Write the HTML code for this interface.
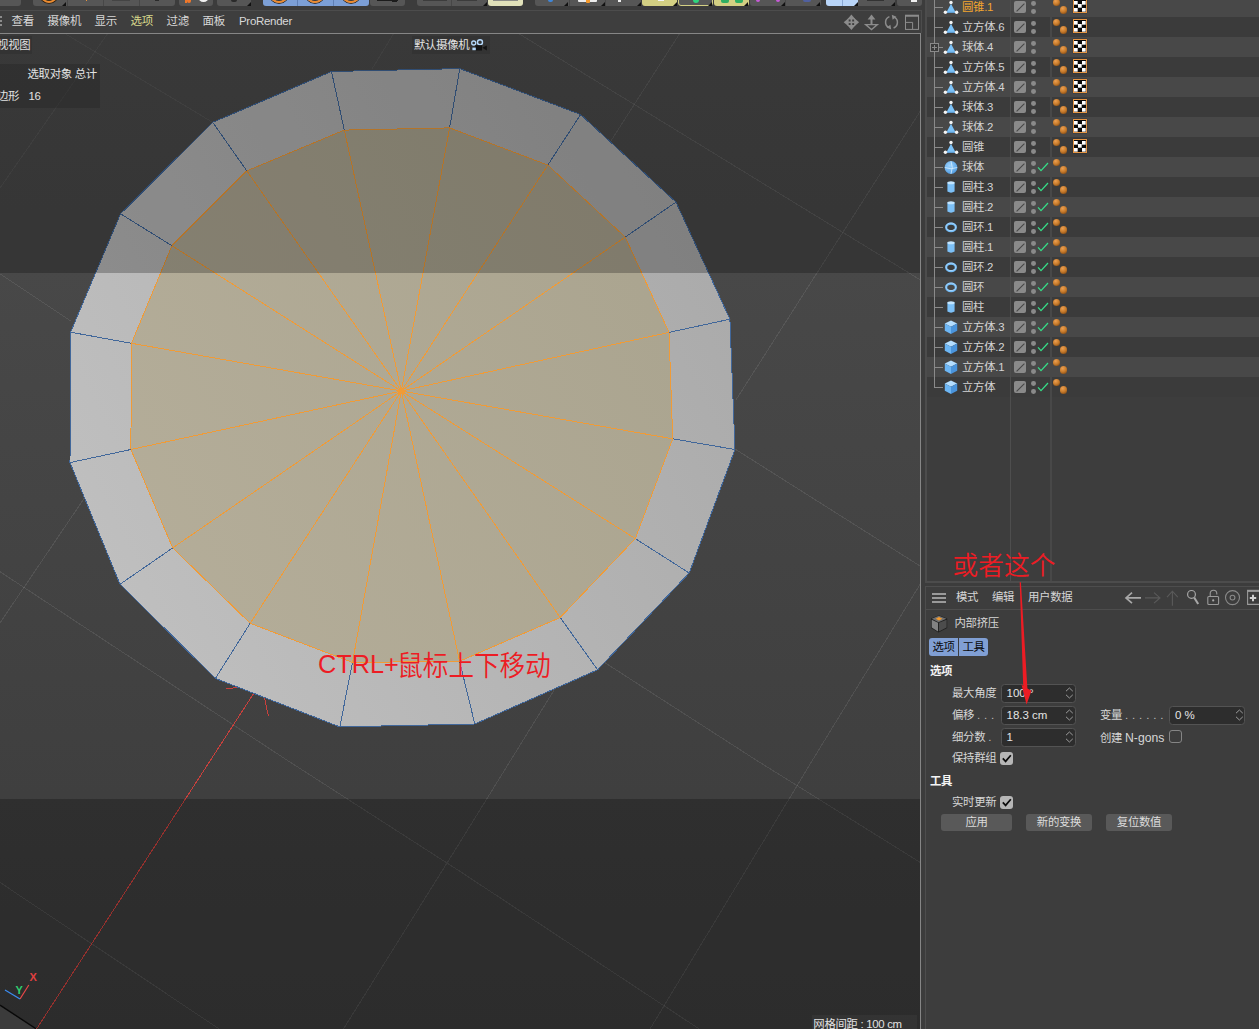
<!DOCTYPE html>
<html lang="zh-CN">
<head>
<meta charset="utf-8">
<title>Cinema 4D</title>
<style>
html,body{margin:0;padding:0}
body{width:1259px;height:1029px;overflow:hidden;position:relative;background:#3c3c3c;
 font-family:"Liberation Sans","Noto Sans CJK SC",sans-serif;font-size:11.4px;letter-spacing:-0.3px;color:#d6d6d6;line-height:1}
i{display:block;font-style:normal}
.abs{position:absolute}
/* top toolbar */
#tb{position:absolute;left:0;top:0;width:1259px;height:10px;background:#3c3c3c}
#tb .b{position:absolute;top:-4px;height:10px;background:#565656;border-radius:3px}
#tb .tri{position:absolute;top:2px;width:0;height:0;border-left:4px solid transparent;border-bottom:4px solid #111}
#tb .dv{position:absolute;top:0;width:1px;height:6px}
#tb .bl{position:absolute;border-top-left-radius:0 !important;border-top-right-radius:0 !important}
#tb .arc{position:absolute;border:2.2px solid #ee8b2e;border-radius:50%;box-shadow:0 0 0 0.8px #2a1a08, inset 0 0 0 0.8px #2a1a08}
#tb .ring{position:absolute;border:2.4px solid #f2f2f2;border-radius:50%}
#tbline{position:absolute;left:0;top:10px;width:922px;height:1px;background:#4c4c4c}
/* viewport menubar */
#mb{position:absolute;left:0;top:11px;width:922px;height:22px;background:#3e3e3e;box-sizing:border-box;border-right:1px solid #4c4c4c}
#mb .hd{position:absolute;left:0;width:2px;height:2px;background:#8c8c8c}
#mb span{position:absolute;font-size:11.5px;top:5px;white-space:nowrap;color:#d8d8d8}
#vpwrap{position:absolute;left:0;top:33px;width:921px;height:996px;background:#868686;overflow:hidden}
svg.vp{position:absolute;left:0;top:1px;width:921px;height:995px}
#vpr{position:absolute;left:920px;top:0;width:1px;height:996px;background:#868686}
svg.vp .g{stroke:#fff;stroke-opacity:0.085;stroke-width:1;shape-rendering:crispEdges}
svg.vp .gf{stroke:#fff;stroke-opacity:0.05;stroke-width:1;shape-rendering:crispEdges}
svg.vp .rx{stroke:#c8403c;stroke-width:1;shape-rendering:crispEdges}
svg.vp .b{stroke:#41679a;stroke-width:1;shape-rendering:crispEdges}
svg.vp .o{stroke:#f09b37;stroke-width:1;shape-rendering:crispEdges}
svg.vp .ax{stroke:#e84848;stroke-width:1.2}
svg.vp .az{stroke:#3c8cf0;stroke-width:1.2}
svg.vp .gz{font-family:"Liberation Sans",sans-serif;font-size:11px;font-weight:bold}
.vlabel{position:absolute;background:rgba(48,48,48,.55);color:#e2e2e2;white-space:nowrap}
.red{letter-spacing:0;color:#ed1c24;position:absolute;white-space:nowrap;transform-origin:0 0;transform:scaleY(1.13)}
/* right side */
#om{position:absolute;left:925px;top:-6px;width:340px;height:589px;border-left:2px solid #4c4c4c;border-bottom:2px solid #4c4c4c;background:#3d3d3d;overflow:hidden;box-sizing:border-box}
#omin{position:absolute;left:0;top:6px;width:340px;height:580px}
.row{position:absolute;left:0;width:340px;height:20px}
.row.l{background:#484848}.row.d{background:#3b3b3b}
.colline{position:absolute;top:0;width:1px;height:583px;background:#4e4e4e}
.tree{position:absolute;left:7px;top:0;width:1px;height:388px;background:#8a8a8a}
.br{position:absolute;left:7px;top:10px;width:9px;height:1px;background:#8a8a8a}
.plus{position:absolute;z-index:3;left:3px;top:6px;width:7px;height:7px;border:1px solid #8a8a8a;background:#3b3b3b}
.plus:before{content:"";position:absolute;left:1px;top:3px;width:5px;height:1px;background:#8a8a8a}
.plus:after{content:"";position:absolute;left:3px;top:1px;width:1px;height:5px;background:#8a8a8a}
.ic{position:absolute;left:15.6px;top:2.2px}
.nm{position:absolute;left:35px;top:4.5px;white-space:nowrap;color:#d4d4d4}
.nm.sel{color:#f3a52f}
.sq{position:absolute;left:87px;top:4px;width:12px;height:12px;border-radius:2px;background:#8a8a8a;overflow:hidden}
.sq:after{content:"";position:absolute;left:0.5px;top:5.5px;width:11px;height:1px;background:#454545;transform:rotate(-45deg)}
.dt{position:absolute;left:103.9px;width:4.8px;height:4.8px;border-radius:50%;background:#8a8a8a}
.dt.a{top:4.2px}.dt.b{top:11.8px}
.ck{position:absolute;left:110.4px;top:5px}
.ball{position:absolute;border-radius:50%;background:radial-gradient(circle at 38% 30%,#eda052 0%,#c67a2a 50%,#6e3c10 100%)}
.ball.s{left:125.9px;top:2px;width:7px;height:7px}
.ball.g{left:132.5px;top:9px;width:7.6px;height:7.6px}
.chk{position:absolute;left:146px;top:2.3px;width:12px;height:12px;border:1.2px solid #e59442;background:#0b0b0b;box-shadow:0 0 1px #222}
.chk b{position:absolute;left:0.4px;top:0.4px;width:11.2px;height:11.2px;
 background:
 linear-gradient(#fff,#fff) 0 0/3.7px 3.7px no-repeat,
 linear-gradient(#fff,#fff) 7.5px 0/3.7px 3.7px no-repeat,
 linear-gradient(#fff,#fff) 3.75px 3.75px/3.7px 3.7px no-repeat,
 linear-gradient(#fff,#fff) 0 7.5px/3.7px 3.7px no-repeat,
 linear-gradient(#fff,#fff) 7.5px 7.5px/3.7px 3.7px no-repeat}
/* attribute manager */
#am{position:absolute;left:925px;top:586px;width:340px;height:450px;border-left:1px solid #4d4d4d;border-top:1px solid #4d4d4d;background:#3d3d3d;box-sizing:border-box}
#am .t{position:absolute;white-space:nowrap;color:#d6d6d6}
#am .h{position:absolute;white-space:nowrap;color:#f4f4f4;font-weight:bold}
#amline{position:absolute;left:0;top:22px;width:340px;height:1px;background:#4d4d4d}
.ham{position:absolute;left:6px;width:14px;height:2px;background:#9a9a9a}
.tab{position:absolute;top:51px;height:18px;width:29px;background:#809fd4;color:#0a0a0a;text-align:center;line-height:18px}
.inp{position:absolute;letter-spacing:0;font-size:11.5px;margin-top:-0.7px;height:18.7px;width:75px;box-sizing:border-box;border:1px solid #535353;border-radius:3.5px;background:#2d2d2d;color:#e4e4e4}
.inp span{position:absolute;left:5px;top:3px;white-space:nowrap}
.inp svg{position:absolute;right:0.2px;top:1px}
.cb{position:absolute;width:13px;height:13px;border-radius:3px;background:#b6b6b6}
.cb.e{background:transparent;border:1px solid #858585;box-sizing:border-box}
.btn{position:absolute;top:227px;height:17px;border-radius:3px;background:#595959;color:#dcdcdc;text-align:center;line-height:17px}
.ds{font-weight:normal;letter-spacing:0.35px;color:#bdbdbd}
</style>
</head>
<body>
<!-- top toolbar (cropped) -->
<div id="tb">
 <i class="b" style="left:-4px;width:25px"></i>
 <i class="b" style="left:33px;width:142px"></i>
 <i class="dv" style="left:66.5px;background:#474747"></i>
 <i class="dv" style="left:103px;background:#474747"></i>
 <i class="dv" style="left:139px;background:#474747"></i>
 <i class="arc" style="left:40.3px;width:13.999999999999998px;height:13.999999999999998px;top:-14.799999999999999px"></i>
 <i class="tri" style="left:62px"></i>
 <i class="bl" style="left:85.5px;top:0px;width:1.6px;height:1.2px;background:#e8923a;border-radius:0px"></i>
 <i class="bl" style="left:155px;top:0px;width:4px;height:1px;background:#2a2a2a;border-radius:0px"></i>
 <i class="bl" style="left:112px;top:0px;width:18px;height:0.6px;background:#444;border-radius:0px"></i>
 <i class="b" style="left:179px;width:34px"></i>
 <i class="bl" style="left:184.5px;top:0px;width:2px;height:3.4px;background:#f0782a;border-radius:0px"></i>
 <i class="bl" style="left:186.5px;top:0px;width:4px;height:2.6px;background:#f0782a;border-radius:2px"></i>
 <i class="ring" style="left:197.6px;top:-8.6px;width:7px;height:7px"></i>
 <i class="b" style="left:217px;width:33.5px"></i>
 <i class="bl" style="left:231px;top:0px;width:5.5px;height:1.6px;background:#2a2a2a;border-radius:2px"></i>
 <i class="tri" style="left:246.5px"></i>
 <i class="b" style="left:263px;width:106px;background:#7c9fd6"></i>
 <i class="dv" style="left:297px;background:#5f7fb4"></i>
 <i class="dv" style="left:333px;background:#5f7fb4"></i>
 <i class="arc" style="left:270.4px;width:13.200000000000001px;height:13.200000000000001px;top:-14.000000000000002px"></i>
 <i class="arc" style="left:306.4px;width:13.200000000000001px;height:13.200000000000001px;top:-14.000000000000002px"></i>
 <i class="arc" style="left:342.4px;width:13.200000000000001px;height:13.200000000000001px;top:-14.000000000000002px"></i>
 <i class="b" style="left:370px;width:35px"></i>
 <i class="bl" style="left:377px;top:0px;width:21px;height:1.4px;background:#1c1c1c;border-radius:0px"></i>
 <i class="bl" style="left:392px;top:0px;width:5px;height:2.4px;background:#1c1c1c;border-radius:0px"></i>
 <i class="b" style="left:417px;width:70px"></i>
 <i class="dv" style="left:451px;background:#474747"></i>
 <i class="bl" style="left:422.5px;top:0px;width:24px;height:0.8px;background:#3c3c3c;border-radius:0px"></i>
 <i class="bl" style="left:457px;top:0px;width:20px;height:0.8px;background:#3c3c3c;border-radius:0px"></i>
 <i class="tri" style="left:483px"></i>
 <i class="b" style="left:487.5px;width:35.5px;background:#e1e1ba"></i>
 <i class="bl" style="left:493px;top:0px;width:24.5px;height:1px;background:#8c8c86;border-radius:0px"></i>
 <i class="b" style="left:534.5px;width:106.5px"></i>
 <i class="dv" style="left:568.5px;background:#474747"></i>
 <i class="dv" style="left:605px;background:#474747"></i>
 <i class="bl" style="left:547.5px;top:0px;width:5.5px;height:1.8px;background:#3f86d8;border-radius:3px"></i>
 <i class="tri" style="left:564px"></i>
 <i class="tri" style="left:600.5px"></i>
 <i class="tri" style="left:636.5px"></i>
 <i class="bl" style="left:578px;top:0px;width:19px;height:2.2px;background:#ececec;border-radius:1px"></i>
 <i class="bl" style="left:585.5px;top:0px;width:4px;height:3.4px;background:#f59a2c;border-radius:1px"></i>
 <i class="bl" style="left:617.5px;top:0px;width:3.5px;height:2px;background:#eee;border-radius:0px"></i>
 <i class="b" style="left:641.5px;width:35.5px;background:#d3cf83"></i>
 <i class="bl" style="left:657.5px;top:0px;width:6px;height:1.4px;background:#f4f4f4;border-radius:0px"></i>
 <i class="tri" style="left:672.5px"></i>
 <i class="b" style="left:678px;width:34.5px;box-sizing:border-box;border:1px solid #d3cf83"></i>
 <i class="bl" style="left:692.5px;top:0px;width:6px;height:2.6px;background:#2fd47e;border-radius:3px"></i>
 <i class="tri" style="left:707.5px"></i>
 <i class="b" style="left:714px;width:34.5px;background:#d3cf83"></i>
 <i class="bl" style="left:721px;top:0px;width:8px;height:2.8px;background:#2fae62;border-radius:2px"></i>
 <i class="bl" style="left:735px;top:0px;width:8px;height:2.8px;background:#2fae62;border-radius:2px"></i>
 <i class="tri" style="left:744px"></i>
 <i class="b" style="left:749.5px;width:71px"></i>
 <i class="dv" style="left:785px;background:#474747"></i>
 <i class="bl" style="left:755.8px;top:0px;width:4.4px;height:2px;background:#c85ad8;border-radius:2px"></i>
 <i class="bl" style="left:775.8px;top:0px;width:4.4px;height:2px;background:#c85ad8;border-radius:2px"></i>
 <i class="tri" style="left:780.5px"></i>
 <i class="bl" style="left:803px;top:0px;width:8px;height:1.6px;background:#5060a0;border-radius:2px"></i>
 <i class="tri" style="left:816px"></i>
 <i class="b" style="left:826px;width:69px"></i>
 <i class="b" style="left:826px;width:32px;background:#b9d5f8;border-radius:3px 0 0 3px"></i>
 <i class="dv" style="left:841.5px;background:#8aa8d4"></i>
 <i class="tri" style="left:854px"></i>
 <i class="bl" style="left:867px;top:0px;width:17px;height:0.8px;background:#333;border-radius:0px"></i>
 <i class="tri" style="left:890.5px"></i>
 <i class="b" style="left:896.5px;width:25.5px"></i>
 <i class="bl" style="left:911px;top:0px;width:5.6px;height:1.6px;background:#f0f0f0;border-radius:0px"></i>
</div>
<div id="tbline"></div>
<!-- viewport menu bar -->
<div id="mb">
 <i class="hd" style="top:5px"></i><i class="hd" style="top:9px"></i><i class="hd" style="top:13px"></i>
 <svg class="abs" style="left:840px;top:2px" width="82" height="20" viewBox="840 13 82 20">
  <g fill="#8c8c8c"><polygon points="851.4,14.6 847.2,19.6 855.6,19.6"/><polygon points="851.4,30 847.2,25 855.6,25"/><polygon points="843.7,22.3 848.7,18.1 848.7,26.5"/><polygon points="859.1,22.3 854.1,18.1 854.1,26.5"/><rect x="850.6" y="19" width="1.6" height="6.6"/><rect x="848.1" y="21.5" width="6.6" height="1.6"/></g>
  <g fill="#8c8c8c"><polygon points="871.5,14.6 867.6,19.4 875.4,19.4"/><rect x="870.5" y="19" width="2" height="5.6"/></g>
  <polygon points="865.6,24.6 877.4,24.6 871.5,29.6" fill="none" stroke="#8c8c8c" stroke-width="1.3"/>
  <g fill="none" stroke="#8c8c8c" stroke-width="1.5"><path d="M889.4 16.6 A6 6 0 0 0 888.6 27.4"/><path d="M893.6 28 A6 6 0 0 0 894.4 17.2"/></g>
  <polygon points="891.2,29.6 886.6,27.6 890.4,24.8" fill="#8c8c8c"/><polygon points="891.8,14.8 896.4,16.8 892.6,19.8" fill="#8c8c8c"/>
  <g fill="none" stroke="#8c8c8c" stroke-width="1"><rect x="905.5" y="16" width="13" height="13.4"/><path d="M905.5 22.4 H912.6 V29.4"/><path d="M905 15.6 H919" stroke-width="1.8"/></g>
 </svg>
 <span style="left:11.5px">查看</span>
 <span style="left:47.5px">摄像机</span>
 <span style="left:94.5px">显示</span>
 <span style="left:130.5px;color:#d9d98c">选项</span>
 <span style="left:166.5px">过滤</span>
 <span style="left:202.5px">面板</span>
 <span style="left:239px">ProRender</span>
</div>
<!-- viewport -->
<div id="vpwrap">
<svg class="vp" width="921" height="995" viewBox="0 0 921 995">
<defs>
<linearGradient id="bg" x1="0" y1="0" x2="0" y2="1"><stop offset="0" stop-color="#4c4c4c"/><stop offset="1" stop-color="#3b3b3b"/></linearGradient>
<linearGradient id="ring" gradientUnits="userSpaceOnUse" x1="100" y1="616" x2="740" y2="296"><stop offset="0" stop-color="#c0c0c0"/><stop offset="1" stop-color="#ababab"/></linearGradient>
<linearGradient id="inner" gradientUnits="userSpaceOnUse" x1="100" y1="616" x2="740" y2="296"><stop offset="0" stop-color="#b5ae9a"/><stop offset="1" stop-color="#aaa48f"/></linearGradient>
</defs>
<rect width="921" height="995" fill="url(#bg)"/>
<polygon points="0,971.2 36,995.6 0,996" fill="#4f4f4f"/>
<line x1="0" y1="971.2" x2="36.5" y2="995.0" stroke="#0c0c0c" stroke-width="1.4"/>
<g class="grid">
<line class="gf" x1="64.0" y1="-1.0" x2="212.0" y2="88.0"/>
<line class="g" x1="735.0" y1="415.0" x2="920.0" y2="532.0"/>
<line class="g" x1="517.8" y1="-1.0" x2="920.0" y2="245.7"/>
<line class="g" x1="0.0" y1="239.8" x2="71.2" y2="287.3"/>
<line class="g" x1="604.3" y1="628.3" x2="756.0" y2="726.0"/>
<line class="g" x1="756.0" y1="726.0" x2="920.0" y2="828.3"/>
<line class="g" x1="0.0" y1="537.7" x2="286.8" y2="726.0"/>
<line class="g" x1="286.8" y1="726.0" x2="460.0" y2="837.4"/>
<line class="g" x1="460.0" y1="837.4" x2="699.3" y2="995.0"/>
<line class="g" x1="0.0" y1="848.4" x2="219.2" y2="995.0"/>
<line class="gf" x1="108.0" y1="-1.0" x2="0.0" y2="154.0"/>
<line class="g" x1="680.0" y1="-1.0" x2="611.0" y2="106.8"/>
<line class="g" x1="920.0" y1="77.6" x2="735.9" y2="366.0"/>
<line class="g" x1="555.0" y1="654.6" x2="460.0" y2="808.2"/>
<line class="g" x1="460.0" y1="808.2" x2="343.4" y2="995.0"/>
<line class="gf" x1="394.0" y1="-1.0" x2="372.0" y2="35.0"/>
<line class="g" x1="84.0" y1="464.6" x2="0.0" y2="588.9"/>
<line class="g" x1="920.0" y1="550.5" x2="812.6" y2="726.0"/>
<line class="g" x1="812.6" y1="726.0" x2="650.0" y2="995.0"/>
</g>
<line class="rx" x1="254.0" y1="659.0" x2="36.5" y2="995.0"/>
<line class="rx" x1="226.5" y1="655.0" x2="237.5" y2="653.4"/>
<line class="rx" x1="264.6" y1="664.2" x2="268.4" y2="682.1"/>
<polygon points="331.5,37.5 459.8,34.6 580.6,80.5 676.0,168.1 729.9,285.2 735.0,415.5 689.2,539.0 597.6,635.8 474.8,690.0 339.8,692.9 215.4,644.4 120.0,550.3 70.0,428.6 70.6,298.2 120.5,179.8 212.7,88.3" fill="url(#ring)"/>
<polygon points="344.3,96.1 449.6,93.9 547.8,131.1 625.2,203.1 669.0,298.4 672.7,404.8 635.3,504.6 560.2,583.5 459.6,627.2 352.5,628.5 250.2,589.3 172.7,513.9 130.9,415.5 131.5,309.3 171.9,211.7 246.8,136.9" fill="url(#inner)"/>
<g class="be">
<line class="b" x1="331.5" y1="37.5" x2="459.8" y2="34.6"/>
<line class="b" x1="331.5" y1="37.5" x2="344.3" y2="96.1"/>
<line class="b" x1="459.8" y1="34.6" x2="580.6" y2="80.5"/>
<line class="b" x1="459.8" y1="34.6" x2="449.6" y2="93.9"/>
<line class="b" x1="580.6" y1="80.5" x2="676.0" y2="168.1"/>
<line class="b" x1="580.6" y1="80.5" x2="547.8" y2="131.1"/>
<line class="b" x1="676.0" y1="168.1" x2="729.9" y2="285.2"/>
<line class="b" x1="676.0" y1="168.1" x2="625.2" y2="203.1"/>
<line class="b" x1="729.9" y1="285.2" x2="735.0" y2="415.5"/>
<line class="b" x1="729.9" y1="285.2" x2="669.0" y2="298.4"/>
<line class="b" x1="735.0" y1="415.5" x2="689.2" y2="539.0"/>
<line class="b" x1="735.0" y1="415.5" x2="672.7" y2="404.8"/>
<line class="b" x1="689.2" y1="539.0" x2="597.6" y2="635.8"/>
<line class="b" x1="689.2" y1="539.0" x2="635.3" y2="504.6"/>
<line class="b" x1="597.6" y1="635.8" x2="474.8" y2="690.0"/>
<line class="b" x1="597.6" y1="635.8" x2="560.2" y2="583.5"/>
<line class="b" x1="474.8" y1="690.0" x2="339.8" y2="692.9"/>
<line class="b" x1="474.8" y1="690.0" x2="459.6" y2="627.2"/>
<line class="b" x1="339.8" y1="692.9" x2="215.4" y2="644.4"/>
<line class="b" x1="339.8" y1="692.9" x2="352.5" y2="628.5"/>
<line class="b" x1="215.4" y1="644.4" x2="120.0" y2="550.3"/>
<line class="b" x1="215.4" y1="644.4" x2="250.2" y2="589.3"/>
<line class="b" x1="120.0" y1="550.3" x2="70.0" y2="428.6"/>
<line class="b" x1="120.0" y1="550.3" x2="172.7" y2="513.9"/>
<line class="b" x1="70.0" y1="428.6" x2="70.6" y2="298.2"/>
<line class="b" x1="70.0" y1="428.6" x2="130.9" y2="415.5"/>
<line class="b" x1="70.6" y1="298.2" x2="120.5" y2="179.8"/>
<line class="b" x1="70.6" y1="298.2" x2="131.5" y2="309.3"/>
<line class="b" x1="120.5" y1="179.8" x2="212.7" y2="88.3"/>
<line class="b" x1="120.5" y1="179.8" x2="171.9" y2="211.7"/>
<line class="b" x1="212.7" y1="88.3" x2="331.5" y2="37.5"/>
<line class="b" x1="212.7" y1="88.3" x2="246.8" y2="136.9"/>
</g><g class="oe">
<line class="o" x1="344.3" y1="96.1" x2="449.6" y2="93.9"/>
<line class="o" x1="344.3" y1="96.1" x2="401.3" y2="357.0"/>
<line class="o" x1="449.6" y1="93.9" x2="547.8" y2="131.1"/>
<line class="o" x1="449.6" y1="93.9" x2="401.3" y2="357.0"/>
<line class="o" x1="547.8" y1="131.1" x2="625.2" y2="203.1"/>
<line class="o" x1="547.8" y1="131.1" x2="401.3" y2="357.0"/>
<line class="o" x1="625.2" y1="203.1" x2="669.0" y2="298.4"/>
<line class="o" x1="625.2" y1="203.1" x2="401.3" y2="357.0"/>
<line class="o" x1="669.0" y1="298.4" x2="672.7" y2="404.8"/>
<line class="o" x1="669.0" y1="298.4" x2="401.3" y2="357.0"/>
<line class="o" x1="672.7" y1="404.8" x2="635.3" y2="504.6"/>
<line class="o" x1="672.7" y1="404.8" x2="401.3" y2="357.0"/>
<line class="o" x1="635.3" y1="504.6" x2="560.2" y2="583.5"/>
<line class="o" x1="635.3" y1="504.6" x2="401.3" y2="357.0"/>
<line class="o" x1="560.2" y1="583.5" x2="459.6" y2="627.2"/>
<line class="o" x1="560.2" y1="583.5" x2="401.3" y2="357.0"/>
<line class="o" x1="459.6" y1="627.2" x2="352.5" y2="628.5"/>
<line class="o" x1="459.6" y1="627.2" x2="401.3" y2="357.0"/>
<line class="o" x1="352.5" y1="628.5" x2="250.2" y2="589.3"/>
<line class="o" x1="352.5" y1="628.5" x2="401.3" y2="357.0"/>
<line class="o" x1="250.2" y1="589.3" x2="172.7" y2="513.9"/>
<line class="o" x1="250.2" y1="589.3" x2="401.3" y2="357.0"/>
<line class="o" x1="172.7" y1="513.9" x2="130.9" y2="415.5"/>
<line class="o" x1="172.7" y1="513.9" x2="401.3" y2="357.0"/>
<line class="o" x1="130.9" y1="415.5" x2="131.5" y2="309.3"/>
<line class="o" x1="130.9" y1="415.5" x2="401.3" y2="357.0"/>
<line class="o" x1="131.5" y1="309.3" x2="171.9" y2="211.7"/>
<line class="o" x1="131.5" y1="309.3" x2="401.3" y2="357.0"/>
<line class="o" x1="171.9" y1="211.7" x2="246.8" y2="136.9"/>
<line class="o" x1="171.9" y1="211.7" x2="401.3" y2="357.0"/>
<line class="o" x1="246.8" y1="136.9" x2="344.3" y2="96.1"/>
<line class="o" x1="246.8" y1="136.9" x2="401.3" y2="357.0"/>
<rect x="399.3" y="355.0" width="4" height="4" fill="#f09b37"/>
</g>
<rect x="0" y="0" width="921" height="239" fill="#000" opacity="0.25"/>
<rect x="0" y="765" width="921" height="231" fill="#000" opacity="0.25"/>
<line class="ax" x1="20.0" y1="965.0" x2="28.8" y2="951.0"/>
<line class="az" x1="20.0" y1="965.0" x2="5.0" y2="956.0"/>
<text x="15.6" y="959.6" class="gz" fill="#2fd070">Y</text>
<text x="29.6" y="947.4" class="gz" fill="#e04040">X</text>
</svg>
 <i id="vpr"></i>
 <div class="vlabel" style="left:-12px;top:3px;width:44px;height:18px"><span class="abs" style="left:-2px;top:4px">透视视图</span></div>
 <div class="vlabel" style="left:412px;top:3px;width:78px;height:18px"><span class="abs" style="left:2px;top:3.8px">默认摄像机</span><svg class="abs" style="left:58px;top:2px" width="18" height="14" viewBox="470 38 18 14"><circle cx="473.7" cy="43" r="2" fill="none" stroke="#b4d8fa" stroke-width="1.3"/><circle cx="480" cy="42.3" r="2.5" fill="none" stroke="#b4d8fa" stroke-width="1.4"/><rect x="475.4" y="45.2" width="6.6" height="5.3" fill="#121212"/><polygon points="482.4,47.8 486.8,45.6 486.8,50.4" fill="#121212"/><rect x="472.4" y="47.6" width="3.4" height="2.6" fill="#b4d8fa"/></svg></div>
 <div class="vlabel" style="left:0;top:31px;width:100px;height:44px;background:rgba(40,40,40,.45)">
  <span class="abs" style="left:27.5px;top:5px">选取对象 总计</span>
  <span class="abs" style="left:-3px;top:26.8px">边形</span>
  <span class="abs" style="left:28.5px;top:27.3px">16</span>
 </div>
 <div class="vlabel" style="left:811.5px;top:982.4px;width:105px;height:14px;background:rgba(70,70,70,.3)"><span class="abs" style="left:1.8px;top:3.6px">网格间距 : 100 cm</span></div>
 <div class="red" style="left:318.4px;top:619.2px;font-size:25.8px;transform:scaleX(0.98)">CTRL+</div><div class="red" style="left:397.2px;top:620px;font-size:25.6px;font-weight:350;transform:scaleY(1.09)">鼠标上下移动</div>
</div>
<!-- object manager -->
<div id="om"><div id="omin">
<div class="row l" style="top:-3px"><i class="br"></i><svg class="ic" width="16" height="16" viewBox="0 0 16 16"><polygon points="8,4.8 3.2,13.7 12.8,13.7" fill="#7cc2f8"/><rect x="3.2" y="12.8" width="9.6" height="0.9" fill="#5a9ad2"/><circle cx="8" cy="3.5" r="1.7" fill="#f4f4f4"/><circle cx="2.4" cy="13.3" r="1.7" fill="#f4f4f4"/><circle cx="13.6" cy="13.3" r="1.7" fill="#f4f4f4"/></svg><span class="nm sel">圆锥.1</span><i class="sq"></i><i class="dt a"></i><i class="dt b"></i><i class="ball s"></i><i class="ball g"></i><i class="chk"><b></b></i></div>
<div class="row d" style="top:17px"><i class="br"></i><svg class="ic" width="16" height="16" viewBox="0 0 16 16"><polygon points="8,4.8 3.2,13.7 12.8,13.7" fill="#7cc2f8"/><rect x="3.2" y="12.8" width="9.6" height="0.9" fill="#5a9ad2"/><circle cx="8" cy="3.5" r="1.7" fill="#f4f4f4"/><circle cx="2.4" cy="13.3" r="1.7" fill="#f4f4f4"/><circle cx="13.6" cy="13.3" r="1.7" fill="#f4f4f4"/></svg><span class="nm">立方体.6</span><i class="sq"></i><i class="dt a"></i><i class="dt b"></i><i class="ball s"></i><i class="ball g"></i><i class="chk"><b></b></i></div>
<div class="row l" style="top:37px"><i class="br"></i><i class="plus"></i><svg class="ic" width="16" height="16" viewBox="0 0 16 16"><polygon points="8,4.8 3.2,13.7 12.8,13.7" fill="#7cc2f8"/><rect x="3.2" y="12.8" width="9.6" height="0.9" fill="#5a9ad2"/><circle cx="8" cy="3.5" r="1.7" fill="#f4f4f4"/><circle cx="2.4" cy="13.3" r="1.7" fill="#f4f4f4"/><circle cx="13.6" cy="13.3" r="1.7" fill="#f4f4f4"/></svg><span class="nm">球体.4</span><i class="sq"></i><i class="dt a"></i><i class="dt b"></i><i class="ball s"></i><i class="ball g"></i><i class="chk"><b></b></i></div>
<div class="row d" style="top:57px"><i class="br"></i><svg class="ic" width="16" height="16" viewBox="0 0 16 16"><polygon points="8,4.8 3.2,13.7 12.8,13.7" fill="#7cc2f8"/><rect x="3.2" y="12.8" width="9.6" height="0.9" fill="#5a9ad2"/><circle cx="8" cy="3.5" r="1.7" fill="#f4f4f4"/><circle cx="2.4" cy="13.3" r="1.7" fill="#f4f4f4"/><circle cx="13.6" cy="13.3" r="1.7" fill="#f4f4f4"/></svg><span class="nm">立方体.5</span><i class="sq"></i><i class="dt a"></i><i class="dt b"></i><i class="ball s"></i><i class="ball g"></i><i class="chk"><b></b></i></div>
<div class="row l" style="top:77px"><i class="br"></i><svg class="ic" width="16" height="16" viewBox="0 0 16 16"><polygon points="8,4.8 3.2,13.7 12.8,13.7" fill="#7cc2f8"/><rect x="3.2" y="12.8" width="9.6" height="0.9" fill="#5a9ad2"/><circle cx="8" cy="3.5" r="1.7" fill="#f4f4f4"/><circle cx="2.4" cy="13.3" r="1.7" fill="#f4f4f4"/><circle cx="13.6" cy="13.3" r="1.7" fill="#f4f4f4"/></svg><span class="nm">立方体.4</span><i class="sq"></i><i class="dt a"></i><i class="dt b"></i><i class="ball s"></i><i class="ball g"></i><i class="chk"><b></b></i></div>
<div class="row d" style="top:97px"><i class="br"></i><svg class="ic" width="16" height="16" viewBox="0 0 16 16"><polygon points="8,4.8 3.2,13.7 12.8,13.7" fill="#7cc2f8"/><rect x="3.2" y="12.8" width="9.6" height="0.9" fill="#5a9ad2"/><circle cx="8" cy="3.5" r="1.7" fill="#f4f4f4"/><circle cx="2.4" cy="13.3" r="1.7" fill="#f4f4f4"/><circle cx="13.6" cy="13.3" r="1.7" fill="#f4f4f4"/></svg><span class="nm">球体.3</span><i class="sq"></i><i class="dt a"></i><i class="dt b"></i><i class="ball s"></i><i class="ball g"></i><i class="chk"><b></b></i></div>
<div class="row l" style="top:117px"><i class="br"></i><svg class="ic" width="16" height="16" viewBox="0 0 16 16"><polygon points="8,4.8 3.2,13.7 12.8,13.7" fill="#7cc2f8"/><rect x="3.2" y="12.8" width="9.6" height="0.9" fill="#5a9ad2"/><circle cx="8" cy="3.5" r="1.7" fill="#f4f4f4"/><circle cx="2.4" cy="13.3" r="1.7" fill="#f4f4f4"/><circle cx="13.6" cy="13.3" r="1.7" fill="#f4f4f4"/></svg><span class="nm">球体.2</span><i class="sq"></i><i class="dt a"></i><i class="dt b"></i><i class="ball s"></i><i class="ball g"></i><i class="chk"><b></b></i></div>
<div class="row d" style="top:137px"><i class="br"></i><svg class="ic" width="16" height="16" viewBox="0 0 16 16"><polygon points="8,4.8 3.2,13.7 12.8,13.7" fill="#7cc2f8"/><rect x="3.2" y="12.8" width="9.6" height="0.9" fill="#5a9ad2"/><circle cx="8" cy="3.5" r="1.7" fill="#f4f4f4"/><circle cx="2.4" cy="13.3" r="1.7" fill="#f4f4f4"/><circle cx="13.6" cy="13.3" r="1.7" fill="#f4f4f4"/></svg><span class="nm">圆锥</span><i class="sq"></i><i class="dt a"></i><i class="dt b"></i><i class="ball s"></i><i class="ball g"></i><i class="chk"><b></b></i></div>
<div class="row l" style="top:157px"><i class="br"></i><svg class="ic" width="16" height="16" viewBox="0 0 16 16"><defs><radialGradient id="sg" cx="0.4" cy="0.35" r="0.7"><stop offset="0" stop-color="#9ed4ff"/><stop offset="1" stop-color="#4f9be0"/></radialGradient></defs><circle cx="8" cy="8.5" r="6.4" fill="url(#sg)"/><path d="M1.8 8.5 Q8 11 14.2 8.5 M8 2.2 Q10.5 8.5 8 14.8" stroke="#d8efff" stroke-width="0.8" fill="none"/></svg><span class="nm">球体</span><i class="sq"></i><i class="dt a"></i><i class="dt b"></i><svg class="ck" width="12" height="10" viewBox="0 0 12 10"><path d="M1 5.4 L4 8.6 L11 1" fill="none" stroke="#36de88" stroke-width="1.25"/></svg><i class="ball s"></i><i class="ball g"></i></div>
<div class="row d" style="top:177px"><i class="br"></i><svg class="ic" width="16" height="16" viewBox="0 0 16 16"><path d="M4.4 3.6 V12.6 Q8 14.8 11.6 12.6 V3.6 Z" fill="#7cc0f7"/><ellipse cx="8" cy="3.7" rx="3.6" ry="1.5" fill="#c2e5ff"/></svg><span class="nm">圆柱.3</span><i class="sq"></i><i class="dt a"></i><i class="dt b"></i><svg class="ck" width="12" height="10" viewBox="0 0 12 10"><path d="M1 5.4 L4 8.6 L11 1" fill="none" stroke="#36de88" stroke-width="1.25"/></svg><i class="ball s"></i><i class="ball g"></i></div>
<div class="row l" style="top:197px"><i class="br"></i><svg class="ic" width="16" height="16" viewBox="0 0 16 16"><path d="M4.4 3.6 V12.6 Q8 14.8 11.6 12.6 V3.6 Z" fill="#7cc0f7"/><ellipse cx="8" cy="3.7" rx="3.6" ry="1.5" fill="#c2e5ff"/></svg><span class="nm">圆柱.2</span><i class="sq"></i><i class="dt a"></i><i class="dt b"></i><svg class="ck" width="12" height="10" viewBox="0 0 12 10"><path d="M1 5.4 L4 8.6 L11 1" fill="none" stroke="#36de88" stroke-width="1.25"/></svg><i class="ball s"></i><i class="ball g"></i></div>
<div class="row d" style="top:217px"><i class="br"></i><svg class="ic" width="16" height="16" viewBox="0 0 16 16"><ellipse cx="8" cy="8.4" rx="4.8" ry="3.8" fill="none" stroke="#74bcf6" stroke-width="2.2"/><ellipse cx="8" cy="7.8" rx="5" ry="3.8" fill="none" stroke="#b4dcff" stroke-width="0.7"/></svg><span class="nm">圆环.1</span><i class="sq"></i><i class="dt a"></i><i class="dt b"></i><svg class="ck" width="12" height="10" viewBox="0 0 12 10"><path d="M1 5.4 L4 8.6 L11 1" fill="none" stroke="#36de88" stroke-width="1.25"/></svg><i class="ball s"></i><i class="ball g"></i></div>
<div class="row l" style="top:237px"><i class="br"></i><svg class="ic" width="16" height="16" viewBox="0 0 16 16"><path d="M4.4 3.6 V12.6 Q8 14.8 11.6 12.6 V3.6 Z" fill="#7cc0f7"/><ellipse cx="8" cy="3.7" rx="3.6" ry="1.5" fill="#c2e5ff"/></svg><span class="nm">圆柱.1</span><i class="sq"></i><i class="dt a"></i><i class="dt b"></i><svg class="ck" width="12" height="10" viewBox="0 0 12 10"><path d="M1 5.4 L4 8.6 L11 1" fill="none" stroke="#36de88" stroke-width="1.25"/></svg><i class="ball s"></i><i class="ball g"></i></div>
<div class="row d" style="top:257px"><i class="br"></i><svg class="ic" width="16" height="16" viewBox="0 0 16 16"><ellipse cx="8" cy="8.4" rx="4.8" ry="3.8" fill="none" stroke="#74bcf6" stroke-width="2.2"/><ellipse cx="8" cy="7.8" rx="5" ry="3.8" fill="none" stroke="#b4dcff" stroke-width="0.7"/></svg><span class="nm">圆环.2</span><i class="sq"></i><i class="dt a"></i><i class="dt b"></i><svg class="ck" width="12" height="10" viewBox="0 0 12 10"><path d="M1 5.4 L4 8.6 L11 1" fill="none" stroke="#36de88" stroke-width="1.25"/></svg><i class="ball s"></i><i class="ball g"></i></div>
<div class="row l" style="top:277px"><i class="br"></i><svg class="ic" width="16" height="16" viewBox="0 0 16 16"><ellipse cx="8" cy="8.4" rx="4.8" ry="3.8" fill="none" stroke="#74bcf6" stroke-width="2.2"/><ellipse cx="8" cy="7.8" rx="5" ry="3.8" fill="none" stroke="#b4dcff" stroke-width="0.7"/></svg><span class="nm">圆环</span><i class="sq"></i><i class="dt a"></i><i class="dt b"></i><svg class="ck" width="12" height="10" viewBox="0 0 12 10"><path d="M1 5.4 L4 8.6 L11 1" fill="none" stroke="#36de88" stroke-width="1.25"/></svg><i class="ball s"></i><i class="ball g"></i></div>
<div class="row d" style="top:297px"><i class="br"></i><svg class="ic" width="16" height="16" viewBox="0 0 16 16"><path d="M4.4 3.6 V12.6 Q8 14.8 11.6 12.6 V3.6 Z" fill="#7cc0f7"/><ellipse cx="8" cy="3.7" rx="3.6" ry="1.5" fill="#c2e5ff"/></svg><span class="nm">圆柱</span><i class="sq"></i><i class="dt a"></i><i class="dt b"></i><svg class="ck" width="12" height="10" viewBox="0 0 12 10"><path d="M1 5.4 L4 8.6 L11 1" fill="none" stroke="#36de88" stroke-width="1.25"/></svg><i class="ball s"></i><i class="ball g"></i></div>
<div class="row l" style="top:317px"><i class="br"></i><svg class="ic" width="16" height="16" viewBox="0 0 16 16"><polygon points="8,1.6 14.2,4.6 8,7.8 1.8,4.6" fill="#b4deff"/><polygon points="1.8,4.6 8,7.8 8,15 1.8,11.8" fill="#6db6f4"/><polygon points="14.2,4.6 8,7.8 8,15 14.2,11.8" fill="#4a94dc"/></svg><span class="nm">立方体.3</span><i class="sq"></i><i class="dt a"></i><i class="dt b"></i><svg class="ck" width="12" height="10" viewBox="0 0 12 10"><path d="M1 5.4 L4 8.6 L11 1" fill="none" stroke="#36de88" stroke-width="1.25"/></svg><i class="ball s"></i><i class="ball g"></i></div>
<div class="row d" style="top:337px"><i class="br"></i><svg class="ic" width="16" height="16" viewBox="0 0 16 16"><polygon points="8,1.6 14.2,4.6 8,7.8 1.8,4.6" fill="#b4deff"/><polygon points="1.8,4.6 8,7.8 8,15 1.8,11.8" fill="#6db6f4"/><polygon points="14.2,4.6 8,7.8 8,15 14.2,11.8" fill="#4a94dc"/></svg><span class="nm">立方体.2</span><i class="sq"></i><i class="dt a"></i><i class="dt b"></i><svg class="ck" width="12" height="10" viewBox="0 0 12 10"><path d="M1 5.4 L4 8.6 L11 1" fill="none" stroke="#36de88" stroke-width="1.25"/></svg><i class="ball s"></i><i class="ball g"></i></div>
<div class="row l" style="top:357px"><i class="br"></i><svg class="ic" width="16" height="16" viewBox="0 0 16 16"><polygon points="8,1.6 14.2,4.6 8,7.8 1.8,4.6" fill="#b4deff"/><polygon points="1.8,4.6 8,7.8 8,15 1.8,11.8" fill="#6db6f4"/><polygon points="14.2,4.6 8,7.8 8,15 14.2,11.8" fill="#4a94dc"/></svg><span class="nm">立方体.1</span><i class="sq"></i><i class="dt a"></i><i class="dt b"></i><svg class="ck" width="12" height="10" viewBox="0 0 12 10"><path d="M1 5.4 L4 8.6 L11 1" fill="none" stroke="#36de88" stroke-width="1.25"/></svg><i class="ball s"></i><i class="ball g"></i></div>
<div class="row d" style="top:377px"><i class="br last"></i><svg class="ic" width="16" height="16" viewBox="0 0 16 16"><polygon points="8,1.6 14.2,4.6 8,7.8 1.8,4.6" fill="#b4deff"/><polygon points="1.8,4.6 8,7.8 8,15 1.8,11.8" fill="#6db6f4"/><polygon points="14.2,4.6 8,7.8 8,15 14.2,11.8" fill="#4a94dc"/></svg><span class="nm">立方体</span><i class="sq"></i><i class="dt a"></i><i class="dt b"></i><svg class="ck" width="12" height="10" viewBox="0 0 12 10"><path d="M1 5.4 L4 8.6 L11 1" fill="none" stroke="#36de88" stroke-width="1.25"/></svg><i class="ball s"></i><i class="ball g"></i></div>
 <i class="tree"></i>
 <i class="colline" style="left:83px"></i>
 <i class="colline" style="left:122.5px;width:2px;background:#484848"></i>
</div></div>
<!-- attribute manager -->
<div id="am">
 <i class="ham" style="top:6px"></i><i class="ham" style="top:10px"></i><i class="ham" style="top:14px"></i>
 <span class="t" style="left:30px;top:5px">模式</span>
 <span class="t" style="left:66px;top:5px">编辑</span>
 <span class="t" style="left:102px;top:5px">用户数据</span>
 <div id="amline"></div>
 <svg class="abs" style="left:195px;top:1px" width="140" height="22" viewBox="1121 588 140 22">
  <g fill="none" stroke="#a8a8a8" stroke-width="1.7"><path d="M1141 597.9 H1126.2 M1132 592.6 L1126 597.9 L1132 603.2"/></g>
  <g fill="none" stroke="#5a5a5a" stroke-width="1.1"><path d="M1145 597.9 H1159.6 M1154 592.6 L1160 597.9 L1154 603.2"/><path d="M1172.4 605.8 V591.4 M1167 597.2 L1172.4 591.2 L1177.8 597.2"/></g>
  <g fill="none" stroke="#a8a8a8"><circle cx="1191.5" cy="594.4" r="3.9" stroke-width="1.2"/><path d="M1194.2 597.6 L1198.2 604" stroke-width="2"/></g>
  <g fill="none" stroke="#9a9a9a" stroke-width="1.1"><rect x="1207.8" y="596.5" width="10.8" height="8" rx="1"/><path d="M1210.2 596.4 V593.6 A3.3 3.3 0 0 1 1216.8 593.6 V594.6"/></g><circle cx="1213.2" cy="600.4" r="1.1" fill="#a8a8a8"/>
  <g fill="none" stroke="#8a8a8a" stroke-width="1.1"><circle cx="1232.5" cy="597.6" r="7"/><circle cx="1232.5" cy="597.6" r="2.4"/></g>
  <g fill="none" stroke="#9a9a9a" stroke-width="1.1"><path d="M1262 604.4 H1247.6 V591 H1262"/><path d="M1247 590.8 H1262" stroke-width="2"/></g>
  <path d="M1249.8 598 H1256.2 M1253 594.8 V601.2" stroke="#cfcfcf" stroke-width="2" fill="none"/>
 </svg>
 <svg class="abs" style="left:4px;top:27px" width="20" height="20" viewBox="930 614 20 20">
  <polygon points="938.8,615.2 947.2,618.6 947.2,628 938.4,632.6 931,628 931,618.6" fill="#1e1e1e"/>
  <polygon points="938.8,615.8 946.4,618.7 938.5,622.2 931.8,618.7" fill="#707070"/>
  <polygon points="931.7,619.7 938,622.8 938,631.6 931.7,627.6" fill="#828282"/>
  <polygon points="946.6,619.7 938.9,622.8 938.9,631.6 946.6,627.6" fill="#4c4c4c"/>
  <polygon points="939,617 942.3,618.8 939,620.6 935.7,618.8" fill="#f39a2e"/>
 </svg>
 <span class="t" style="left:28.5px;top:31px">内部挤压</span>
 <div class="tab" style="left:3px;border-radius:3px 0 0 3px">选项</div>
 <div class="tab" style="left:33px;border-radius:0 3px 3px 0">工具</div>
 <span class="h" style="left:4px;top:79px">选项</span>
 <span class="t" style="left:26px;top:101px">最大角度</span>
 <div class="inp" style="left:74.5px;top:97.5px"><span>100 °</span><svg width="9" height="14" viewBox="0 0 9 14"><path d="M1 5.2 L4.4 2 L7.8 5.2 M1 8.8 L4.4 12 L7.8 8.8" fill="none" stroke="#9c9c9c" stroke-width="1"/></svg></div>
 <span class="t" style="left:26px;top:123px">偏移 <b class="ds">. . .</b></span>
 <div class="inp" style="left:74.5px;top:119.5px"><span>18.3 cm</span><svg width="9" height="14" viewBox="0 0 9 14"><path d="M1 5.2 L4.4 2 L7.8 5.2 M1 8.8 L4.4 12 L7.8 8.8" fill="none" stroke="#9c9c9c" stroke-width="1"/></svg></div>
 <span class="t" style="left:26px;top:145px">细分数 <b class="ds">.</b></span>
 <div class="inp" style="left:74.5px;top:141.5px"><span>1</span><svg width="9" height="14" viewBox="0 0 9 14"><path d="M1 5.2 L4.4 2 L7.8 5.2 M1 8.8 L4.4 12 L7.8 8.8" fill="none" stroke="#9c9c9c" stroke-width="1"/></svg></div>
 <span class="t" style="left:26px;top:166px">保持群组</span>
 <i class="cb" style="left:74px;top:165px"><svg width="13" height="13" viewBox="0 0 13 13"><path d="M2.8 6.4 L5.6 9.4 L10.8 3.2" fill="none" stroke="#0c0c0c" stroke-width="1.7"/></svg></i>
 <span class="t" style="left:174px;top:123px">变量 <b class="ds">. . . . . .</b></span>
 <div class="inp" style="left:243px;top:119.5px;width:76px"><span>0 %</span><svg width="9" height="14" viewBox="0 0 9 14"><path d="M1 5.2 L4.4 2 L7.8 5.2 M1 8.8 L4.4 12 L7.8 8.8" fill="none" stroke="#9c9c9c" stroke-width="1"/></svg></div>
 <span class="t" style="left:174px;top:145px">创建 <b style="font-weight:normal;font-size:12.2px;letter-spacing:0">N-gons</b></span>
 <i class="cb e" style="left:243px;top:143px"></i>
 <span class="h" style="left:4px;top:189px">工具</span>
 <span class="t" style="left:26px;top:210px">实时更新</span>
 <i class="cb" style="left:74px;top:209px"><svg width="13" height="13" viewBox="0 0 13 13"><path d="M2.8 6.4 L5.6 9.4 L10.8 3.2" fill="none" stroke="#0c0c0c" stroke-width="1.7"/></svg></i>
 <div class="btn" style="left:15px;width:71px">应用</div>
 <div class="btn" style="left:100px;width:66px">新的变换</div>
 <div class="btn" style="left:180px;width:66px">复位数值</div>
</div>
<!-- red annotation -->
<div class="red" style="left:952.6px;top:554.2px;font-size:25.7px;transform:scaleY(1.0);font-weight:350">或者这个</div>
<svg class="abs" style="left:1010px;top:578px" width="30" height="130" viewBox="1010 578 30 130"><polygon points="1019.7,582.3 1020.9,582.3 1027.4,688.4 1031.5,690.8 1026.5,704.6 1021.3,683.6 1023.2,686.2" fill="#ed1c24"/></svg>
</body>
</html>
